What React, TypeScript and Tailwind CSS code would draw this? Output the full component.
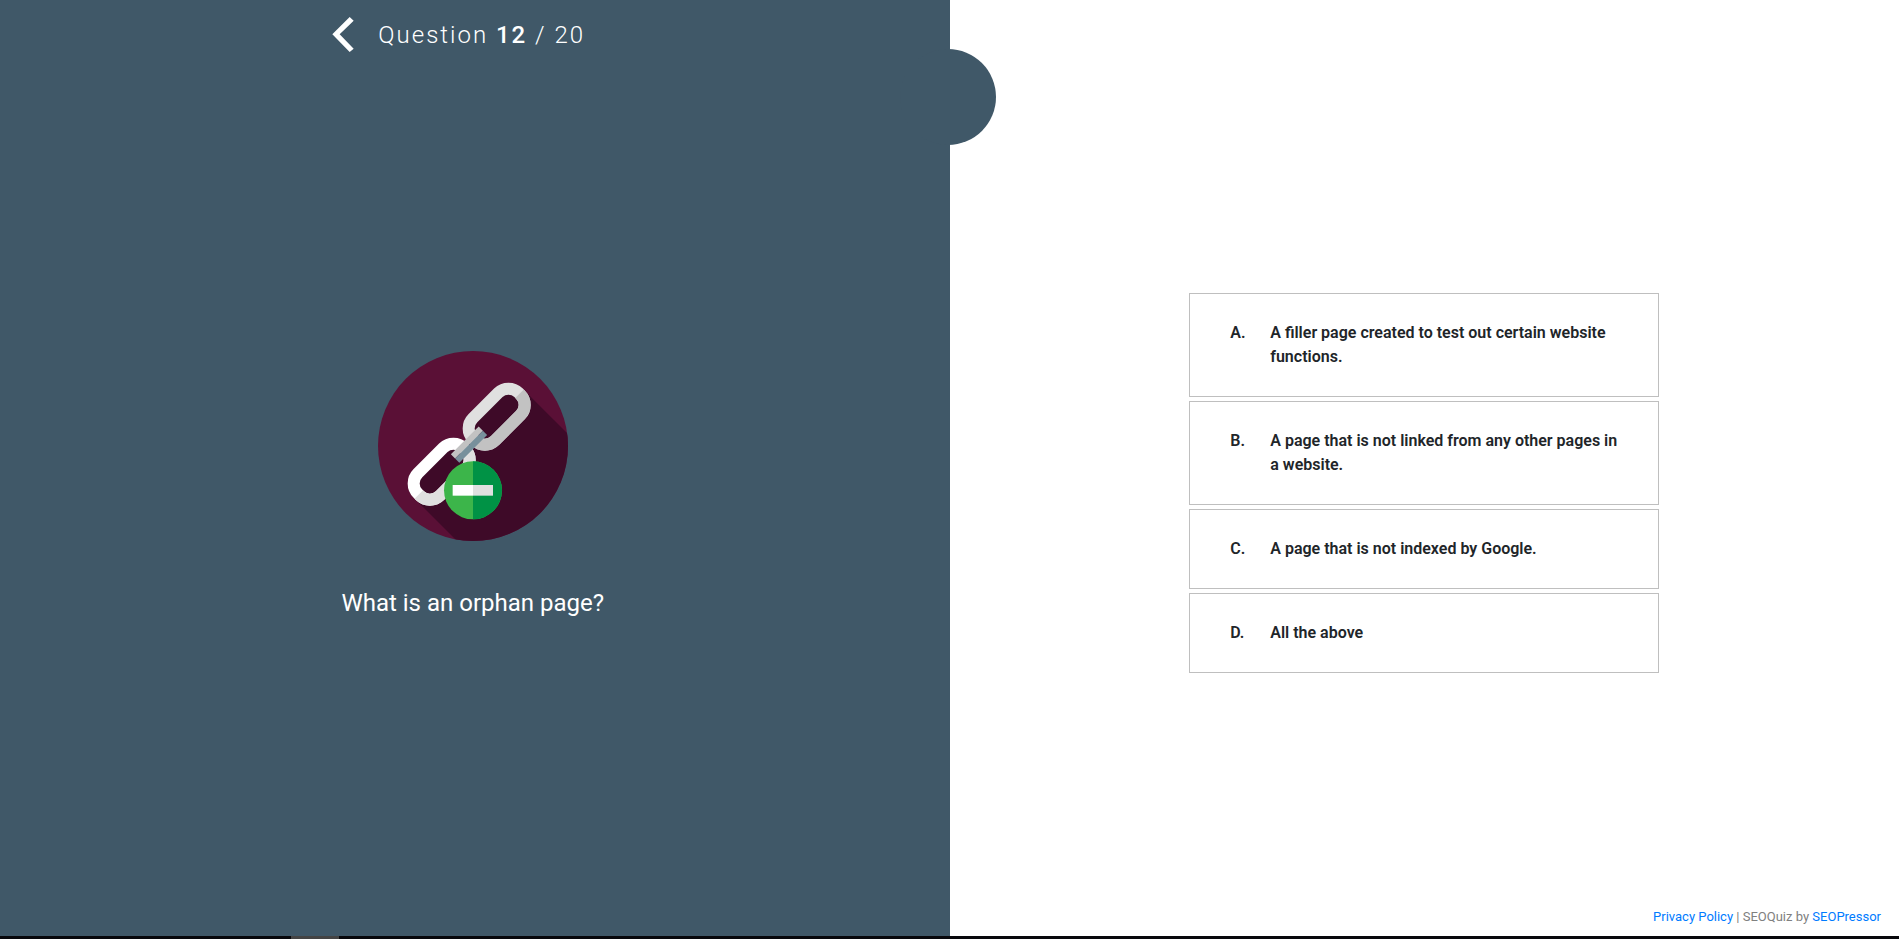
import React from "react";

const answers = [
  { letter: "A.", text: "A filler page created to test out certain website functions." },
  { letter: "B.", text: "A page that is not linked from any other pages in a website." },
  { letter: "C.", text: "A page that is not indexed by Google." },
  { letter: "D.", text: "All the above" },
];

export default function App() {
  return (
    <div className="flex min-h-screen flex-col bg-white font-['Roboto',sans-serif] text-base text-[#212529]">
      <main className="grid flex-1 grid-cols-2">
        <QuestionPanel />
        <AnswerPanel />
      </main>
      <div className="h-[3px] bg-[#08080c] pl-[291px]">
        <div className="h-full w-12 bg-[#444444]" />
      </div>
    </div>
  );
}

function QuestionPanel() {
  return (
    <section className="relative flex flex-col bg-[#405868] text-white">
      <header className="flex h-16 items-center gap-6 pt-1 pl-[35%]">
        <button type="button" aria-label="Previous question">
          <ChevronIcon className="h-[35px] w-[22px]" />
        </button>
        <p className="pt-0.5 text-2xl font-light tracking-[2px]">
          Question <span className="font-medium">12</span> / 20
        </p>
      </header>
      <div className="flex flex-1 flex-col items-center justify-center gap-12 pr-1 pb-8">
        <BrokenLinkIcon className="size-[190px]" />
        <h1 className="text-2xl leading-7">What is an orphan page?</h1>
      </div>
      <div className="absolute top-[49px] -right-[46px] size-24 rounded-full bg-[#405868]" />
    </section>
  );
}

function AnswerPanel() {
  return (
    <section className="flex flex-col pt-[62px]">
      <div className="flex flex-1 flex-col items-center justify-center gap-1">
        {answers.map((answer) => (
          <button
            key={answer.letter}
            type="button"
            className="flex w-full max-w-[470px] border border-[#bfbfbf] py-[27px] pr-8 pl-10 text-left font-semibold"
          >
            <span className="w-10 shrink-0">{answer.letter}</span>
            <span>{answer.text}</span>
          </button>
        ))}
      </div>
      <footer className="flex h-8 items-center justify-end pr-[18px] pb-1.5 text-[13px] text-[#808080]">
        <p>
          <a href="#privacy" className="text-[#007bff]">Privacy Policy</a> | SEOQuiz by{" "}
          <a href="#seopressor" className="text-[#007bff]">SEOPressor</a>
        </p>
      </footer>
    </section>
  );
}

function ChevronIcon(props: React.SVGProps<SVGSVGElement>) {
  return (
    <svg {...props} viewBox="0 0 64 105" fill="currentColor">
      <path d="M52 0 64 11 22 52 64 95 52 105 0 52Z" />
    </svg>
  );
}

function BrokenLinkIcon(props: React.SVGProps<SVGSVGElement>) {
  return (
    <svg {...props} viewBox="39 31 570 570" fill="none">
      <defs>
        <clipPath id="disc">
          <circle cx="324" cy="316" r="285" />
        </clipPath>
        <clipPath id="lower-half">
          <rect x="-130" y="0" width="260" height="80" />
        </clipPath>
      </defs>
      <circle cx="324" cy="316" r="285" fill="#5a1036" />
      <path d="M476 147 876 547 549 874 149 474Z" fill="#3e0a28" clipPath="url(#disc)" />
      {/* lower link */}
      <g transform="translate(230 393) rotate(-45)" strokeWidth="36">
        <rect x="-97" y="-47" width="194" height="94" rx="43" fill="#3e0a28" stroke="#ffffff" />
        <rect x="-97" y="-47" width="194" height="94" rx="43" stroke="#e0e0e0" clipPath="url(#lower-half)" />
      </g>
      {/* upper link */}
      <g transform="translate(395 228) rotate(-45)" strokeWidth="36">
        <rect x="-97" y="-47" width="194" height="94" rx="43" fill="#3e0a28" stroke="#e0e0e0" />
        <rect x="-97" y="-47" width="194" height="94" rx="43" stroke="#c2c2c2" clipPath="url(#lower-half)" />
      </g>
      <g transform="translate(312 312) rotate(-45)">
        <rect x="-59" y="-18" width="118" height="18" fill="#c2c2c2" />
        <rect x="-59" y="0" width="118" height="18" fill="#78909c" />
      </g>
      <circle cx="324" cy="449" r="87" fill="#3cb54a" />
      <path d="M324 362a87 87 0 0 1 0 174Z" fill="#009245" />
      <rect x="263" y="433" width="61" height="32" fill="#ffffff" />
      <rect x="324" y="433" width="60" height="32" fill="#e0e0e0" />
    </svg>
  );
}
